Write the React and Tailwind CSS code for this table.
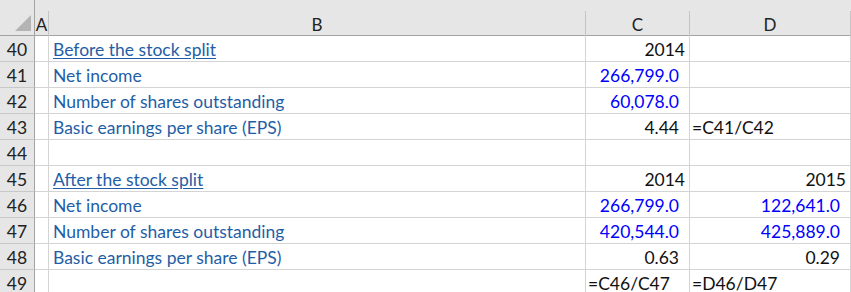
const ROWS = [
  { n: 40, b: "Before the stock split", u: true, c: "2014", cc: "yr" },
  { n: 41, b: "Net income", c: "266,799.0", cc: "in" },
  { n: 42, b: "Number of shares outstanding", c: "60,078.0", cc: "in" },
  { n: 43, b: "Basic earnings per share (EPS)", c: "4.44", cc: "calc", d: "=C41/C42", dc: "note" },
  { n: 44 },
  { n: 45, b: "After the stock split", u: true, c: "2014", cc: "yr", d: "2015", dc: "yr" },
  { n: 46, b: "Net income", c: "266,799.0", cc: "in", d: "122,641.0", dc: "in" },
  { n: 47, b: "Number of shares outstanding", c: "420,544.0", cc: "in", d: "425,889.0", dc: "in" },
  { n: 48, b: "Basic earnings per share (EPS)", c: "0.63", cc: "calc", d: "0.29", dc: "calc" },
  { n: 49, c: "=C46/C47", cc: "note", d: "=D46/D47", dc: "note" },
];

const VALUE_STYLE = {
  yr: "justify-end pr-[4px] text-[#111]",
  in: "justify-end pr-[10px] text-[#0000ff]",
  calc: "justify-end pr-[10px] text-[#111]",
  note: "justify-start pl-[2px] text-[#111]",
};

function Cell({ kind, children }) {
  return (
    <div className={`flex items-end pb-[3px] border-r border-b border-[#d4d4d4] overflow-visible whitespace-nowrap ${kind ? VALUE_STYLE[kind] : ""}`}>
      {children}
    </div>
  );
}

export default function App() {
  return (
    <div className="w-[851px] h-[292px] overflow-hidden bg-white text-[17.5px] leading-none" style={{ fontFamily: "Lato, 'Open Sans', sans-serif" }}>
      <div className="grid grid-cols-[35px_14px_537px_104px_1fr] grid-rows-[36px] bg-[#e6e6e6] border-b border-[#a3a3a3] h-[36px]">
        <div className="relative border-r border-[#a3a3a3]">
          <svg className="absolute left-[15px] top-[15px]" width="16" height="16" viewBox="0 0 16 16">
            <polygon points="16,0 16,16 0,16" fill="#b4b4b4" />
          </svg>
        </div>
        {["A", "B", "C", "D"].map((l) => (
          <div key={l} className="mt-[11px] flex items-center justify-center border-r border-[#c4c4c4] text-[#222] text-[17px] pt-[1px]">
            {l}
          </div>
        ))}
      </div>
      {ROWS.map((r) => (
        <div key={r.n} className="grid grid-cols-[35px_14px_537px_104px_1fr] h-[26px]">
          <div className="flex items-end justify-center pb-[3px] bg-[#e6e6e6] border-r border-[#a3a3a3] border-b border-b-[#c8c8c8] text-[#222]">
            {r.n}
          </div>
          <Cell />
          <div className="flex items-end pb-[3px] pl-[4px] border-r border-b border-[#d4d4d4] text-[#1f5ea6]">
            {r.b && <span className={r.u ? "underline underline-offset-[2px]" : ""}>{r.b}</span>}
          </div>
          <Cell kind={r.cc}>{r.c}</Cell>
          <Cell kind={r.dc}>{r.d}</Cell>
        </div>
      ))}
    </div>
  );
}
